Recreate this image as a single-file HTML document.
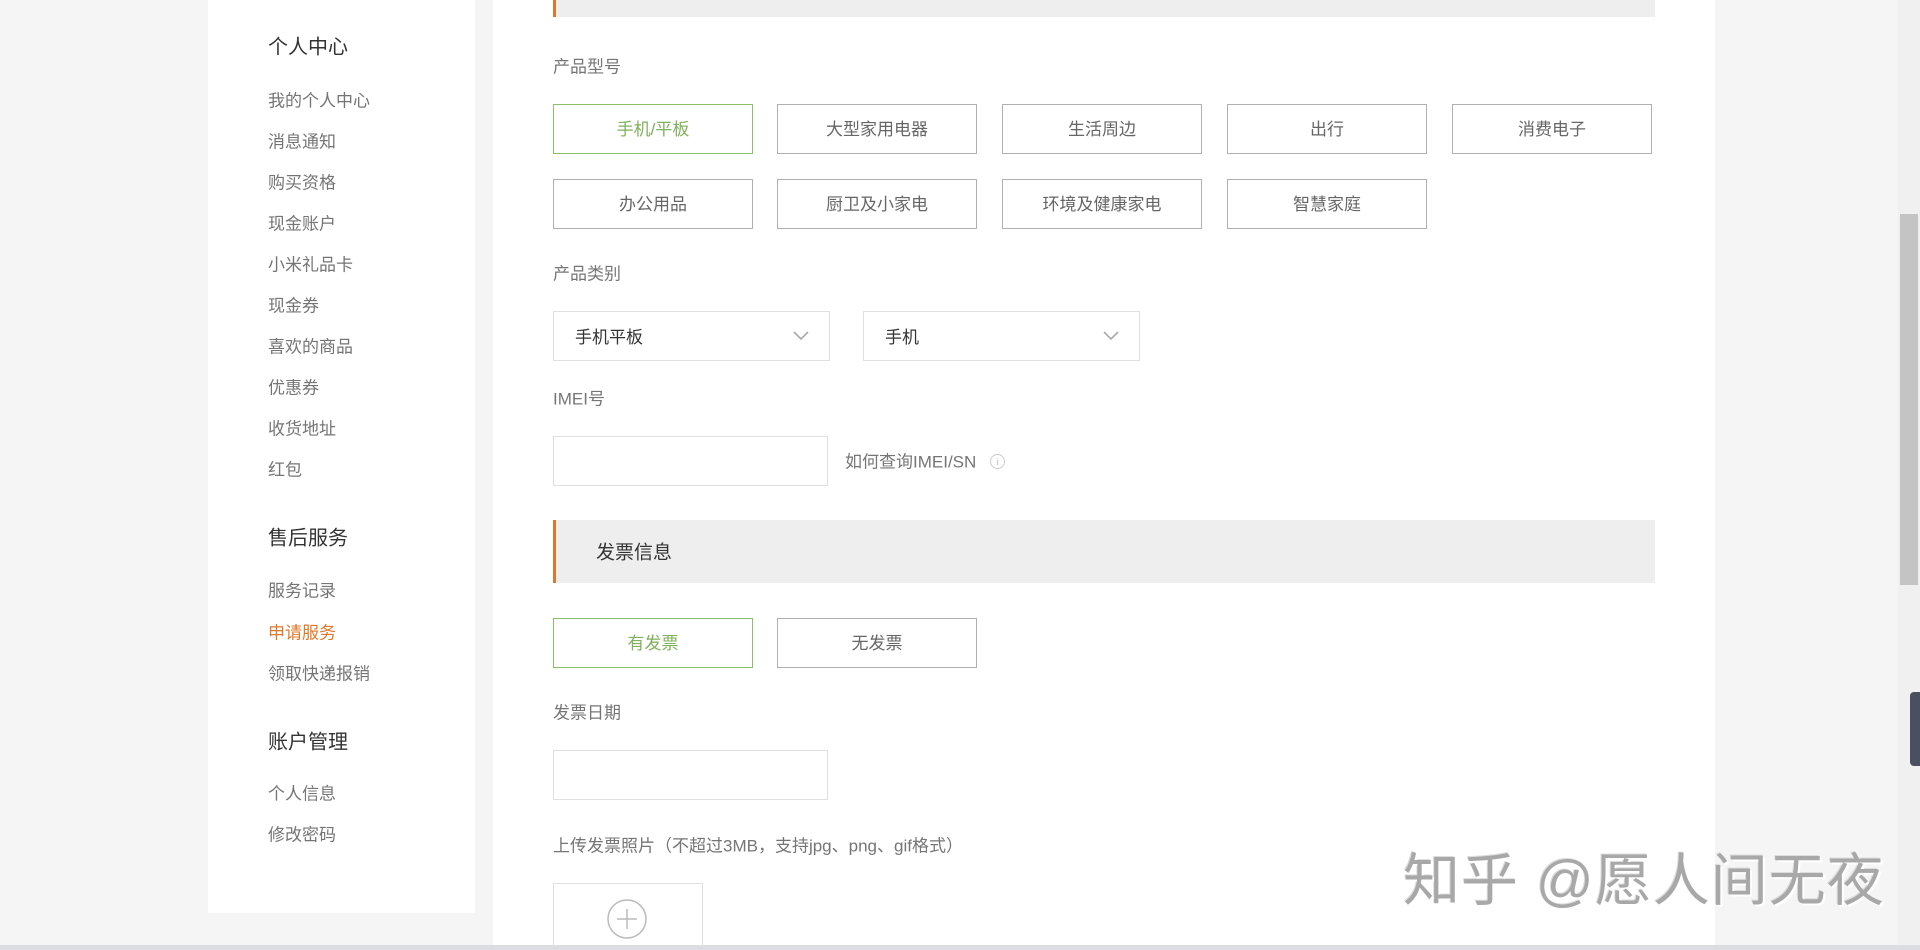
<!DOCTYPE html>
<html style="overflow:hidden;height:950px"><head><meta charset="utf-8"><style>
*{margin:0;padding:0;box-sizing:border-box}
body{width:1920px;height:950px;background:#f5f5f5;position:relative;overflow:hidden;font-family:"Liberation Sans","Noto Sans CJK SC",sans-serif;color:#616161}
.a{position:absolute;white-space:nowrap}
.side{left:208px;top:0;width:267px;height:913px;background:#fff}
.main{left:493px;top:0;width:1222px;height:945px;background:#fff}
.h{font-size:20px;color:#333;left:268px;transform:translateY(-50%)}
.i{font-size:17px;color:#757575;left:268px;transform:translateY(-50%)}
.lb{font-size:17px;color:#757575;left:553px;transform:translateY(-50%)}
.btn{border:1px solid #b0b0b0;width:200px;height:50px;display:flex;align-items:center;justify-content:center;font-size:17px;color:#666;padding-bottom:3px}
.sel{border-color:#8dbe6a;color:#7fb05a}
.box{border:1px solid #e0e0e0}
.bar{background:#eee;border-left:3px solid #e0782a}
.dd{font-size:17px;color:#333;padding-left:21px;display:flex;align-items:center;padding-bottom:2px}
</style></head><body>
<div class="a side"></div>
<div class="a main"></div>
<div class="a h" style="top:45px">个人中心</div>
<div class="a i" style="top:99px">我的个人中心</div>
<div class="a i" style="top:140px">消息通知</div>
<div class="a i" style="top:181px">购买资格</div>
<div class="a i" style="top:222px">现金账户</div>
<div class="a i" style="top:263px">小米礼品卡</div>
<div class="a i" style="top:304px">现金券</div>
<div class="a i" style="top:345px">喜欢的商品</div>
<div class="a i" style="top:386px">优惠券</div>
<div class="a i" style="top:427px">收货地址</div>
<div class="a i" style="top:468px">红包</div>
<div class="a h" style="top:536px">售后服务</div>
<div class="a i" style="top:589px">服务记录</div>
<div class="a i" style="top:631px;color:#e0782a">申请服务</div>
<div class="a i" style="top:672px">领取快递报销</div>
<div class="a h" style="top:740px">账户管理</div>
<div class="a i" style="top:792px">个人信息</div>
<div class="a i" style="top:833px">修改密码</div>

<div class="a bar" style="left:553px;top:0;width:1102px;height:17px"></div>
<div class="a lb" style="top:65px">产品型号</div>
<div class="a btn sel" style="left:553px;top:104px">手机/平板</div>
<div class="a btn" style="left:777px;top:104px">大型家用电器</div>
<div class="a btn" style="left:1002px;top:104px">生活周边</div>
<div class="a btn" style="left:1227px;top:104px">出行</div>
<div class="a btn" style="left:1452px;top:104px">消费电子</div>
<div class="a btn" style="left:553px;top:179px">办公用品</div>
<div class="a btn" style="left:777px;top:179px">厨卫及小家电</div>
<div class="a btn" style="left:1002px;top:179px">环境及健康家电</div>
<div class="a btn" style="left:1227px;top:179px">智慧家庭</div>
<div class="a lb" style="top:272px">产品类别</div>
<div class="a box dd" style="left:553px;top:311px;width:277px;height:50px">手机平板
<svg style="position:absolute;right:20px;top:19px" width="16" height="10"><path d="M1 1l7 7 7-7" fill="none" stroke="#aaa" stroke-width="1.6"/></svg></div>
<div class="a box dd" style="left:863px;top:311px;width:277px;height:50px">手机
<svg style="position:absolute;right:20px;top:19px" width="16" height="10"><path d="M1 1l7 7 7-7" fill="none" stroke="#aaa" stroke-width="1.6"/></svg></div>
<div class="a lb" style="top:397px">IMEI号</div>
<div class="a box" style="left:553px;top:436px;width:275px;height:50px"></div>
<div class="a lb" style="left:845px;top:460px">如何查询IMEI/SN</div>
<svg class="a" style="left:989px;top:453px" width="17" height="17"><circle cx="8.5" cy="8.5" r="7" fill="none" stroke="#ccc"/><path d="M8.5 7v5M8.5 5v1" stroke="#ccc" stroke-width="1.2"/></svg>
<div class="a bar" style="left:553px;top:520px;width:1102px;height:63px"></div>
<div class="a" style="left:596px;top:551px;transform:translateY(-50%);font-size:19px;color:#333">发票信息</div>
<div class="a btn sel" style="left:553px;top:618px">有发票</div>
<div class="a btn" style="left:777px;top:618px">无发票</div>
<div class="a lb" style="top:711px">发票日期</div>
<div class="a box" style="left:553px;top:750px;width:275px;height:50px"></div>
<div class="a lb" style="top:844px">上传发票照片（不超过3MB，支持jpg、png、gif格式）</div>
<div class="a box" style="left:553px;top:883px;width:150px;height:62px;border-bottom:none"></div>
<svg class="a" style="left:606px;top:898px" width="42" height="42"><circle cx="21" cy="21" r="19" fill="none" stroke="#bbb" stroke-width="1.5"/><path d="M21 11v20M11 21h20" stroke="#bbb" stroke-width="1.5"/></svg>

<div class="a" style="left:1403px;top:835px;font-size:57px;letter-spacing:1px;color:#a8a8a8;text-shadow:2px 2px 0 #fff,-1px -1px 0 #ddd">知乎 @愿人间无夜</div>

<div class="a" style="left:1898px;top:0;width:22px;height:945px;background:#f0f0f0"></div>
<div class="a" style="left:1900px;top:214px;width:18px;height:371px;background:#c4c4c4"></div>
<div class="a" style="left:1910px;top:692px;width:10px;height:74px;background:#4a5060;border-radius:4px 0 0 4px"></div>
<div class="a" style="left:0;top:945px;width:1920px;height:5px;background:#dcdde3"></div>
</body></html>
